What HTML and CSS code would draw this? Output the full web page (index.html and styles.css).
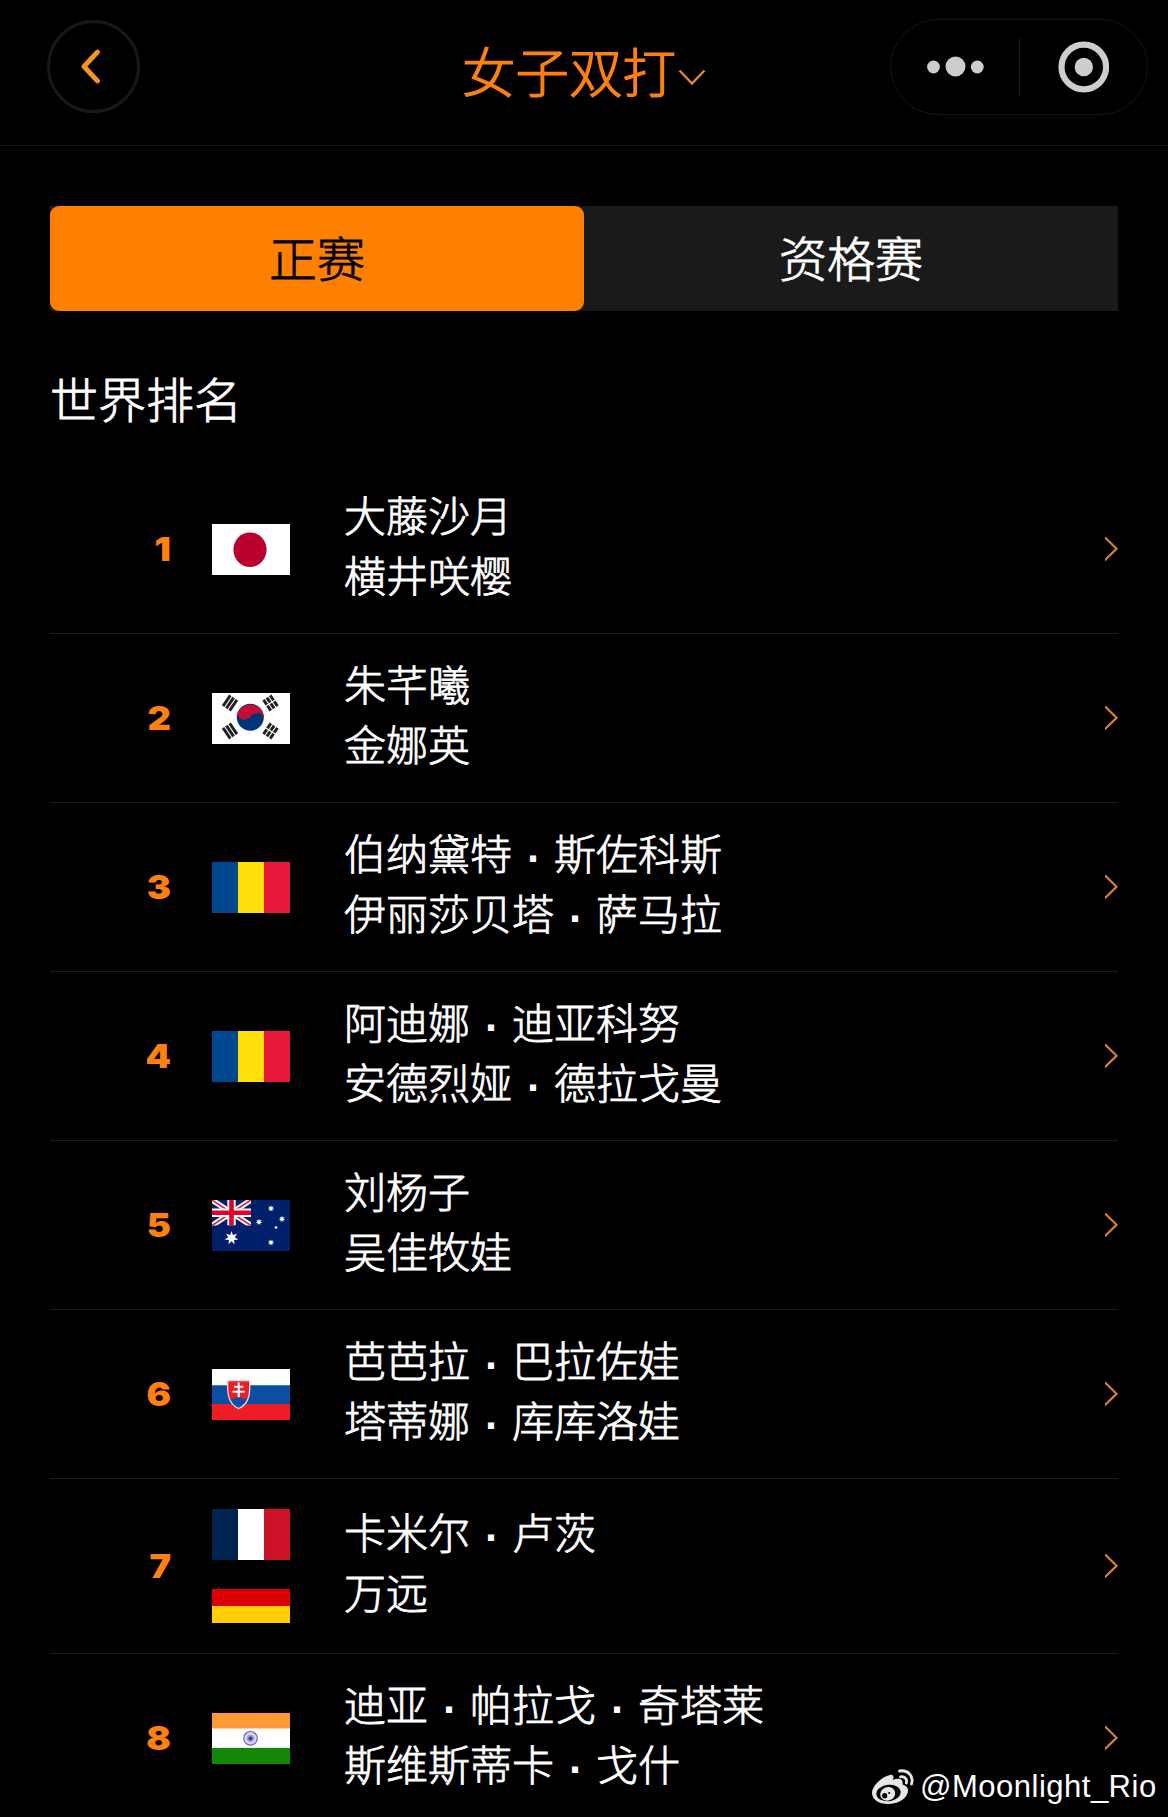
FILE: index.html
```html
<!DOCTYPE html>
<html lang="zh-CN">
<head>
  <meta charset="UTF-8" />
  <meta name="viewport" content="width=device-width, initial-scale=1.0" />
  <title>女子双打 - 世界排名</title>
  <link rel="stylesheet" href="styles.css">
</head>
<body>
  <!-- Shared shapes -->
  <svg class="defs" width="0" height="0">
    <symbol id="arrow" viewBox="0 0 13 24"><path d="M-1 -0.5L11.6 11.8L-1 24" fill="none" stroke="#d9812f" stroke-width="2.2" /></symbol>
    <symbol id="romania" viewBox="0 0 78 51"><path fill="#00478f" d="M0 0h26v51H0z" /><path fill="#ffe00a" d="M26 0h26v51H26z" /><path fill="#e51937" d="M52 0h26v51H52z" /></symbol>
    <symbol id="bars" viewBox="-8 -8 16 16" overflow="visible"><path d="M-6.5 -4H6.5M-6.5 0H6.5M-6.5 4H6.5" stroke="#222" stroke-width="2.9" /></symbol>
    <symbol id="star" viewBox="-10 -10 20 20"><path fill="#fff" d="M0-10L2-4.2 7.8-6.2 4.6-1 9.8 2.2 3.7 2.9 4.3 9 0 4.7-4.3 9-3.7 2.9-9.8 2.2-4.6-1-7.8-6.2-2-4.2z" /></symbol>
  </svg>

  <header class="navbar">
    <button class="back">
      <svg width="24" height="36" viewBox="0 0 24 36"><path d="M18.5 3L5 17.5L18.5 32" fill="none" stroke="#f7941d" stroke-width="4.8" stroke-linecap="round" stroke-linejoin="round" /></svg>
    </button>
    <h1 class="title">女子双打<svg class="caret" width="28" height="18" viewBox="0 0 28 18"><path d="M1.5 1.5L14 14.5L26.5 1.5" fill="none" stroke="#e08a2e" stroke-width="2.4" /></svg></h1>
    <div class="capsule">
      <div class="capsule-half">
        <svg width="60" height="24" viewBox="0 0 60 24"><g fill="#cdcdcd"><circle cx="8.5" cy="12" r="6.4" /><circle cx="30.5" cy="11.5" r="10" /><circle cx="52.3" cy="12" r="6.4" /></g></svg>
      </div>
      <div class="capsule-half">
        <svg width="52" height="52" viewBox="0 0 52 52"><circle cx="26.8" cy="26" r="22.3" fill="none" stroke="#cdcdcd" stroke-width="6.2" /><circle cx="26.8" cy="26" r="9.2" fill="#cdcdcd" /></svg>
      </div>
    </div>
  </header>

  <main>
    <div class="tabs">
      <button class="tab active">正赛</button>
      <button class="tab">资格赛</button>
    </div>

    <h2>世界排名</h2>

    <ul class="ranking">
      <li class="row">
        <span class="rank">1</span>
        <div class="flags">
          <svg class="flag" viewBox="0 0 78 51"><path fill="#fff" d="M0 0h78v51H0z" /><ellipse cx="38" cy="25.7" rx="16.6" ry="17.3" fill="#bc002d" /></svg>
        </div>
        <div class="names"><p>大藤沙月</p><p>横井咲樱</p></div>
        <svg class="arrow"><use href="#arrow" /></svg>
      </li>
      <li class="row">
        <span class="rank">2</span>
        <div class="flags">
          <svg class="flag" viewBox="0 0 78 51">
            <path fill="#fff" d="M0 0h78v51H0z" />
            <circle cx="38.3" cy="24.3" r="13.5" fill="#003478" />
            <path fill="#c60c30" d="M25.2 22A13.5 13.5 0 0 1 51.8 24C49 18.5 42 19.5 38.5 23.5C35 28 28 28 25.2 22z" />
            <use href="#bars" width="16" height="16" transform="translate(18 10) rotate(-56) translate(-8 -8)" />
            <use href="#bars" width="16" height="16" transform="translate(58.5 10) rotate(56) translate(-8 -8)" />
            <use href="#bars" width="16" height="16" transform="translate(18 38) rotate(56) translate(-8 -8)" />
            <use href="#bars" width="16" height="16" transform="translate(58.5 38) rotate(-56) translate(-8 -8)" />
            <path d="M53 13.5l11-7M53 34.5l11 7" stroke="#fff" stroke-width="1.2" />
          </svg>
        </div>
        <div class="names"><p>朱芊曦</p><p>金娜英</p></div>
        <svg class="arrow"><use href="#arrow" /></svg>
      </li>
      <li class="row">
        <span class="rank">3</span>
        <div class="flags"><svg class="flag"><use href="#romania" /></svg></div>
        <div class="names"><p>伯纳黛特<i>·</i>斯佐科斯</p><p>伊丽莎贝塔<i>·</i>萨马拉</p></div>
        <svg class="arrow"><use href="#arrow" /></svg>
      </li>
      <li class="row">
        <span class="rank">4</span>
        <div class="flags"><svg class="flag"><use href="#romania" /></svg></div>
        <div class="names"><p>阿迪娜<i>·</i>迪亚科努</p><p>安德烈娅<i>·</i>德拉戈曼</p></div>
        <svg class="arrow"><use href="#arrow" /></svg>
      </li>
      <li class="row">
        <span class="rank">5</span>
        <div class="flags">
          <svg class="flag" viewBox="0 0 78 51">
            <path fill="#00206b" d="M0 0h78v51H0z" />
            <svg width="39" height="25.5" viewBox="0 0 39 25.5">
              <path d="M0 0L39 25.5M39 0L0 25.5" stroke="#fff" stroke-width="5.4" />
              <path d="M0 0L39 25.5M39 0L0 25.5" stroke="#e4244a" stroke-width="1.7" />
              <path d="M19.5 0v25.5M0 12.7h39" stroke="#fff" stroke-width="8.4" />
              <path d="M19.5 0v25.5M0 12.7h39" stroke="#e4002b" stroke-width="4.6" />
            </svg>
            <use href="#star" x="12.5" y="31" width="14" height="14" />
            <use href="#star" x="55.7" y="5.2" width="6.6" height="6.6" />
            <use href="#star" x="66.7" y="15.7" width="6.6" height="6.6" />
            <use href="#star" x="43.7" y="18.7" width="6.6" height="6.6" />
            <use href="#star" x="62" y="25.5" width="4" height="4" />
            <use href="#star" x="55.7" y="39.2" width="6.6" height="6.6" />
          </svg>
        </div>
        <div class="names"><p>刘杨子</p><p>吴佳牧娃</p></div>
        <svg class="arrow"><use href="#arrow" /></svg>
      </li>
      <li class="row">
        <span class="rank">6</span>
        <div class="flags">
          <svg class="flag" viewBox="0 0 78 51">
            <path fill="#fff" d="M0 0h78v17H0z" /><path fill="#0b4ea2" d="M0 16.3h78V36H0z" /><path fill="#ee1c25" d="M0 35h78v16H0z" />
            <path d="M15.7 11.7h22C38 22 38.5 34.5 26.7 39.6C15 34.5 15.4 22 15.7 11.7z" fill="#ee1c25" />
            <path d="M17.5 31.5c1.5-2.4 4-2.5 5-1.5c1.5-2.6 6.5-2.6 8 0c1.5-1 4-.6 5.3 1.5c-2 4-5 6-9.1 8c-4.2-2-7.3-4-9.2-8z" fill="#0b4ea2" />
            <path d="M15.7 11.7h22C38 22 38.5 34.5 26.7 39.6C15 34.5 15.4 22 15.7 11.7z" fill="none" stroke="#f3dfe8" stroke-width="1.2" />
            <path d="M26.7 13.5v14.8M22 17.7h9.4M20.4 22.7h12.6" stroke="#fff" stroke-width="2" />
          </svg>
        </div>
        <div class="names"><p>芭芭拉<i>·</i>巴拉佐娃</p><p>塔蒂娜<i>·</i>库库洛娃</p></div>
        <svg class="arrow"><use href="#arrow" /></svg>
      </li>
      <li class="row">
        <span class="rank">7</span>
        <div class="flags">
          <svg class="flag" viewBox="0 0 78 51"><path fill="#00234f" d="M0 0h26v51H0z" /><path fill="#fff" d="M26 0h26.3v51H26z" /><path fill="#cd1126" d="M52.3 0H78v51H52.3z" /></svg>
          <svg class="flag" viewBox="0 0 78 51"><path fill="#000" d="M0 0h78v17H0z" /><path fill="#dd0000" d="M0 17h78v17H0z" /><path fill="#ffce05" d="M0 34h78v17H0z" /></svg>
        </div>
        <div class="names"><p>卡米尔<i>·</i>卢茨</p><p>万远</p></div>
        <svg class="arrow"><use href="#arrow" /></svg>
      </li>
      <li class="row">
        <span class="rank">8</span>
        <div class="flags">
          <svg class="flag" viewBox="0 0 78 51">
            <path fill="#ff9933" d="M0 0h78v16H0z" /><path fill="#fff" d="M0 15.5h78V35H0z" /><path fill="#138808" d="M0 35h78v16H0z" />
            <circle cx="38.5" cy="25.3" r="6.8" fill="#d5d5ee" stroke="#6a6ab8" stroke-width="1.2" />
            <circle cx="38.5" cy="25.3" r="3.6" fill="#9a9ad2" /><circle cx="38.5" cy="25.3" r="1.9" fill="#3c3ca0" />
          </svg>
        </div>
        <div class="names"><p>迪亚<i>·</i>帕拉戈<i>·</i>奇塔莱</p><p>斯维斯蒂卡<i>·</i>戈什</p></div>
        <svg class="arrow"><use href="#arrow" /></svg>
      </li>
    </ul>
  </main>

  <div class="watermark">
    <svg width="43" height="36" viewBox="0 0 43 36">
      <path fill="#e6e6e6" d="M18 6C21.5 5 22.2 8 20.8 11C25.5 8.8 31.5 9 30.6 15.6C35 17 37 19.5 35.5 24.5C33 31 24.5 35 16 35C7 35 0 30.5 0 24C0 17 10 7.5 18 6z" />
      <ellipse cx="16.5" cy="24" rx="12.2" ry="8.2" fill="#000" transform="rotate(-7 16.5 24)" />
      <ellipse cx="15.7" cy="24.8" rx="7.6" ry="6.7" fill="#e6e6e6" transform="rotate(-20 15.7 24.8)" />
      <circle cx="12.7" cy="26.7" r="2.6" fill="#000" /><circle cx="17.2" cy="24" r="1.1" fill="#000" />
      <path d="M27.5 2C36 .5 42 7 39.5 15M28.5 7.8C32.8 7.2 35.5 10 34.3 14" fill="none" stroke="#e6e6e6" stroke-width="2.8" stroke-linecap="round" />
    </svg>
    <span>@Moonlight_Rio</span>
  </div>
</body>
</html>
```
FILE: styles.css
```css
* {
  box-sizing: border-box;
  margin: 0;
  padding: 0;
}
body {
  position: relative;
  height: 1817px;
  overflow: hidden;
  background: #000;
  color: #fff;
  font-family: "Noto Sans CJK SC", sans-serif;
  font-weight: 300;
  -webkit-text-stroke: 0.8px currentColor;
}
svg {
  display: block;
  flex-shrink: 0;
}
.defs {
  position: absolute;
}
button {
  border: none;
  background: none;
  font: inherit;
  color: inherit;
}
/* Top bar */
.navbar {
  display: grid;
  grid-template-columns: 258px 1fr 258px;
  height: 146px;
  padding: 19px 20px 0 47px;
  border-bottom: 1px solid #1a1a1a;
}
.back {
  display: flex;
  align-items: center;
  justify-content: center;
  width: 93px;
  height: 93px;
  margin-top: 1px;
  padding-right: 5px;
  border: 3px solid #181818;
  border-radius: 50%;
}
.title {
  display: flex;
  justify-content: center;
  height: 102px;
  padding-right: 27px;
  color: #ff800f;
  font-size: 53.5px;
  font-weight: 300;
  line-height: 102px;
  -webkit-text-stroke: 1.2px currentColor;
}
.caret {
  margin: 50px 0 0 2px;
}
.capsule {
  display: flex;
  height: 96px;
  border: 1px solid #151515;
  border-radius: 48px;
}
.capsule-half {
  display: flex;
  flex: 1;
  align-items: center;
  justify-content: center;
  position: relative;
}
.capsule-half:last-child::before {
  content: "";
  position: absolute;
  left: 0;
  width: 1px;
  height: 60px;
  background: #1c1c1c;
}
/* Tabs */
main {
  padding: 60px 50px 0;
}
.tabs {
  display: flex;
  height: 105px;
  background: #1a1a1a;
}
.tab {
  flex: 1;
  padding-bottom: 5px;
  font-size: 48px;
  line-height: 100px;
}
.tab.active {
  background: #ff8000;
  border-radius: 9px;
  color: #000;
}
h2 {
  height: 154px;
  padding-top: 50px;
  font-size: 48px;
  font-weight: 300;
  line-height: 72px;
}
/* Ranking list */
.ranking {
  list-style: none;
}
.row {
  display: flex;
  align-items: center;
  min-height: 169px;
  padding: 30px 0;
  border-bottom: 1px solid #1c1c1c;
}
.rank {
  width: 121px;
  margin-right: 41px;
  color: #ff800f;
  font-family: Inter, sans-serif;
  font-size: 33px;
  font-weight: 900;
  line-height: 40px;
  text-align: right;
  transform: scaleX(1.1);
  transform-origin: right;
  -webkit-text-stroke: 0;
}
.flags {
  display: flex;
  flex-direction: column;
  gap: 12px;
  margin-right: 54px;
}
.flag {
  width: 78px;
  height: 51px;
}
.names {
  flex: 1;
  margin: -17px 0 -7px;
  font-size: 42px;
  line-height: 60px;
}
.names p {
  height: 60px;
}
.names i {
  display: inline-block;
  width: 1em;
  font-family: "Liberation Sans", sans-serif;
  font-style: normal;
  text-align: center;
  -webkit-text-stroke: 2px currentColor;
}
.arrow {
  width: 13px;
  height: 24px;
}
/* Watermark */
.watermark {
  position: absolute;
  left: 872px;
  top: 1767px;
  display: flex;
  align-items: center;
  gap: 5px;
  height: 40px;
  font-family: "Liberation Sans", sans-serif;
  font-size: 31px;
  line-height: 40px;
  letter-spacing: 0.5px;
  -webkit-text-stroke: 0;
}
```
